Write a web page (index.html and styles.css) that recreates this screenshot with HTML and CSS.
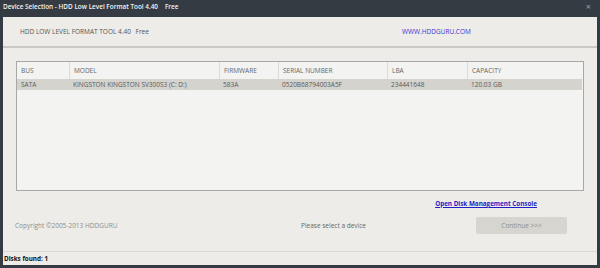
FILE: index.html
```html
<!DOCTYPE html>
<html>
<head>
	<title>Device Selection</title>
	<meta charset="utf-8">
	<link rel="stylesheet" href="styles.css">
</head>
<body>
	<div class="window">
		<!-- 标题栏 -->
		<div class="titlebar">
			<span class="titlebar-text">Device Selection - HDD Low Level Format Tool 4.40</span>
			<span class="titlebar-free">Free</span>
			<span class="titlebar-close">&#215;</span>
		</div>
		<!-- 顶部信息 -->
		<div class="header">
			<div class="header-left">
				<span class="header-name">HDD LOW LEVEL FORMAT TOOL 4.40</span>
				<span class="header-free">Free</span>
			</div>
			<a href="#" class="header-site">WWW.HDDGURU.COM</a>
		</div>
		<!-- 主体 -->
		<div class="main">
			<div class="disk-table">
				<div class="disk-row disk-head">
					<div class="cell c-bus">BUS</div>
					<div class="cell c-model">MODEL</div>
					<div class="cell c-fw">FIRMWARE</div>
					<div class="cell c-sn">SERIAL NUMBER</div>
					<div class="cell c-lba">LBA</div>
					<div class="cell c-cap">CAPACITY</div>
				</div>
				<div class="disk-row disk-item">
					<div class="cell c-bus">SATA</div>
					<div class="cell c-model">KINGSTON KINGSTON SV300S3 (C: D:)</div>
					<div class="cell c-fw">583A</div>
					<div class="cell c-sn">0520B68794003A5F</div>
					<div class="cell c-lba">234441648</div>
					<div class="cell c-cap">120.03 GB</div>
				</div>
			</div>
			<div class="link-row">
				<a href="#" class="console-link">Open Disk Management Console</a>
			</div>
			<div class="footer">
				<span class="copyright">Copyright &#169;2005-2013 HDDGURU</span>
				<span class="message">Please select a device</span>
				<div class="continue-btn">Continue &gt;&gt;&gt;</div>
			</div>
		</div>
		<!-- 状态栏 -->
		<div class="statusbar">Disks found: 1</div>
	</div>
</body>
</html>
```

FILE: styles.css
```css
body {
	margin: 0;
	background-color: #353b42;
	font-family: "Open Sans", "Noto Sans", sans-serif;
	font-size: 6.5px;
}
a {
	text-decoration: none;
}
.window {
	width: 600px;
	height: 268px;
	display: flex;
	flex-direction: column;
}
/* 标题栏 */
.titlebar {
	height: 17px;
	line-height: 13px;
	padding-left: 3px;
	display: flex;
	font-size: 6.4px;
	font-weight: 600;
	color: #f2f3f4;
}
.titlebar-free {
	margin-left: 7px;
}
.titlebar-close {
	margin-left: auto;
	margin-right: 9px;
	color: #9aa0a6;
	font-size: 9px;
	font-weight: normal;
}
/* 顶部信息 */
.header {
	margin: 0 3px;
	height: 29px;
	line-height: 29px;
	padding-left: 17px;
	background-color: #edece8;
	border-bottom: 2px solid #c9c8c3;
	display: flex;
	color: #555;
}
.header-left {
	width: 382px;
}
.header-free {
	margin-left: 3px;
}
.header-site {
	color: #3535d8;
}
/* 主体 */
.main {
	margin: 0 3px;
	flex: 1;
	background-color: #edece8;
	padding: 13px 13px 0 13px;
	border-bottom: 1px solid #d8d7d2;
}
.disk-table {
	height: 128px;
	background-color: #f3f3f2;
	border: 1px solid #a8a8a6;
}
.disk-row {
	display: flex;
}
.disk-head {
	height: 17px;
	line-height: 17px;
	color: #666;
}
.disk-item {
	height: 11px;
	line-height: 11px;
	margin-right: 1px;
	background-color: #d4d3cd;
	color: #5a5a5a;
}
.cell {
	padding-left: 4px;
	box-sizing: border-box;
	white-space: nowrap;
}
.disk-head .cell + .cell {
	border-left: 1px solid #dcdbd7;
}
.c-bus { width: 52px; }
.c-model { width: 150px; }
.c-fw { width: 59px; }
.c-sn { width: 109px; }
.c-lba { width: 80px; }
.c-cap { flex: 1; }
.link-row {
	margin-top: 7px;
	height: 11px;
	line-height: 11px;
	text-align: right;
	padding-right: 47px;
}
.console-link {
	color: #1f1fc4;
	font-weight: bold;
	font-size: 6.3px;
	text-decoration: underline;
}
.footer {
	margin-top: 8px;
	display: flex;
	align-items: center;
}
.copyright {
	margin-left: -1px;
	width: 286px;
	color: #8e8e8c;
}
.message {
	flex: 1;
	color: #666;
}
.continue-btn {
	width: 91px;
	height: 17px;
	line-height: 17px;
	margin-right: 17px;
	text-align: center;
	background-color: #d6d5cf;
	border-radius: 2px;
	color: #8e8e8a;
}
/* 状态栏 */
.statusbar {
	margin: 0 3px 3px 3px;
	height: 13px;
	line-height: 13px;
	padding-left: 1px;
	background-color: #edece8;
	font-weight: bold;
	font-size: 6.3px;
	color: #111;
}
```
